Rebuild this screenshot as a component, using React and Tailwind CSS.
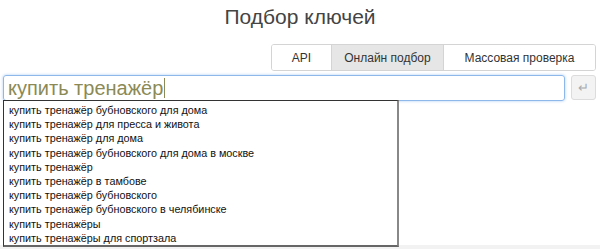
import React from 'react';

const suggestions = [
  'купить тренажёр бубновского для дома',
  'купить тренажёр для пресса и живота',
  'купить тренажёр для дома',
  'купить тренажёр бубновского для дома в москве',
  'купить тренажёр',
  'купить тренажёр в тамбове',
  'купить тренажёр бубновского',
  'купить тренажёр бубновского в челябинске',
  'купить тренажёры',
  'купить тренажёры для спортзала',
];

export default function App() {
  return (
    <div className="w-[600px] h-[249px] bg-white overflow-hidden flex flex-col" style={{ fontFamily: '"Liberation Sans", Arial, sans-serif' }}>
      <h1 className="h-[40px] pt-[3px] text-center text-[21px] leading-[28px] text-[#444]">Подбор ключей</h1>

      <div className="flex justify-end pr-[4px] mt-[4px]">
        <div className="flex h-[27px] border border-[#d4d4d4] rounded-[3px] text-[12px] text-[#333] overflow-hidden">
          <button className="w-[59px] flex items-center justify-center bg-white">API</button>
          <button className="w-[113px] flex items-center justify-center bg-[#e6e6e6] border-x border-[#d4d4d4]">Онлайн подбор</button>
          <button className="w-[151px] flex items-center justify-center bg-white">Массовая проверка</button>
        </div>
      </div>

      <div className="relative flex gap-[6px] px-[3px] mt-[4px]">
        <div className="w-[562px] h-[26px] border border-[#8fb8ea] rounded-[3px] shadow-[0_0_3px_#a9cbf2] flex items-center pl-[4px] text-[20px] text-[#8b8a56]">
          <span>купить тренажёр</span>
          <span className="w-[1px] h-[20px] bg-[#8b8a56] ml-[1px]"></span>
        </div>
        <button className="w-[25px] h-[25px] bg-[#f3f3f3] border border-[#dcdcdc] rounded-[3px] text-[#aaa] text-[13px] flex items-center justify-center">↵</button>

        <ul className="absolute left-[3px] top-[25px] w-[396px] pt-[2px] bg-white border border-[#333] border-r-2 border-r-[#888] border-b-2 border-b-[#666] text-[10.8px] leading-[14.2px] text-[#111] z-10">
          {suggestions.map((s, i) => (
            <li key={i} className="pl-[5px]">{s}</li>
          ))}
        </ul>
      </div>

      <div className="flex-1" />
      <div className="h-[4px] bg-[#f2f2f2]" />
    </div>
  );
}
